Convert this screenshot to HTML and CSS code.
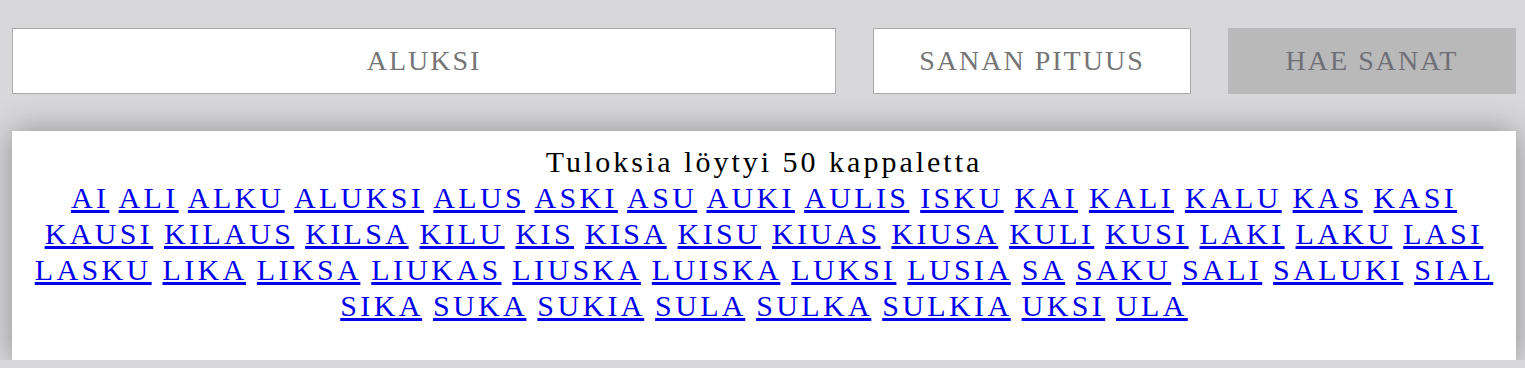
FILE: index.html
```html
<!DOCTYPE html>
<html lang="fi">
  <head>
    <meta charset="UTF-8" />
    <meta name="viewport" content="width=device-width, initial-scale=1.0" />
    <title>Sanahaku</title>

    <link rel="stylesheet" href="styles.css">
  </head>
  <body>
    <form class="search" id="searchForm">
      <input type="text" class="field" placeholder="ALUKSI" />
      <input type="text" class="field" placeholder="SANAN PITUUS" />
      <button type="submit" class="btn">HAE SANAT</button>
    </form>

    <div class="results">
      <p class="count">Tuloksia löytyi 50 kappaletta</p>
      <div class="words" id="wordList"></div>
    </div>

    <script>
      // Word list from the last search
      var words = ["AI", "ALI", "ALKU", "ALUKSI", "ALUS", "ASKI", "ASU", "AUKI",
        "AULIS", "ISKU", "KAI", "KALI", "KALU", "KAS", "KASI", "KAUSI", "KILAUS",
        "KILSA", "KILU", "KIS", "KISA", "KISU", "KIUAS", "KIUSA", "KULI", "KUSI",
        "LAKI", "LAKU", "LASI", "LASKU", "LIKA", "LIKSA", "LIUKAS", "LIUSKA",
        "LUISKA", "LUKSI", "LUSIA", "SA", "SAKU", "SALI", "SALUKI", "SIAL", "SIKA",
        "SUKA", "SUKIA", "SULA", "SULKA", "SULKIA", "UKSI", "ULA"];

      var list = document.getElementById("wordList");
      for (var i = 0; i < words.length; i++) {
        var link = document.createElement("a");
        link.href = "#";
        link.textContent = words[i];
        list.appendChild(link);
        list.appendChild(document.createTextNode(" "));
      }
    </script>
  </body>
</html>
```

FILE: styles.css
```css
* {
  margin: 0;
  padding: 0;
  box-sizing: border-box;
}

body {
  background-color: #d8d8da;
  font-family: "Liberation Serif", "Times New Roman", serif;
  padding: 28px 9px 0 12px;
}

.search {
  display: grid;
  grid-template-columns: 824px 318px 1fr;
  gap: 37px;
  height: 66px;
}

.field,
.btn {
  font-family: "Liberation Serif", "Times New Roman", serif;
  font-size: 28px;
  letter-spacing: 2px;
  text-align: center;
  outline: none;
}

.field {
  border: 1px solid #a9a9a9;
  background-color: #fff;
}

.field::placeholder {
  color: #757575;
}

.btn {
  border: none;
  background-color: #b9b9b9;
  color: #6f6f76;
}

.results {
  margin-top: 37px;
  background-color: #fff;
  box-shadow: 0 0 30px rgba(0, 0, 0, 0.34);
  padding: 13px 16px 36px;
  text-align: center;
  font-size: 30px;
  line-height: 36px;
  letter-spacing: 3px;
}

.count {
  color: #000;
}

.words {
  letter-spacing: 3.37px;
}

.words a {
  color: #00e;
}
```
